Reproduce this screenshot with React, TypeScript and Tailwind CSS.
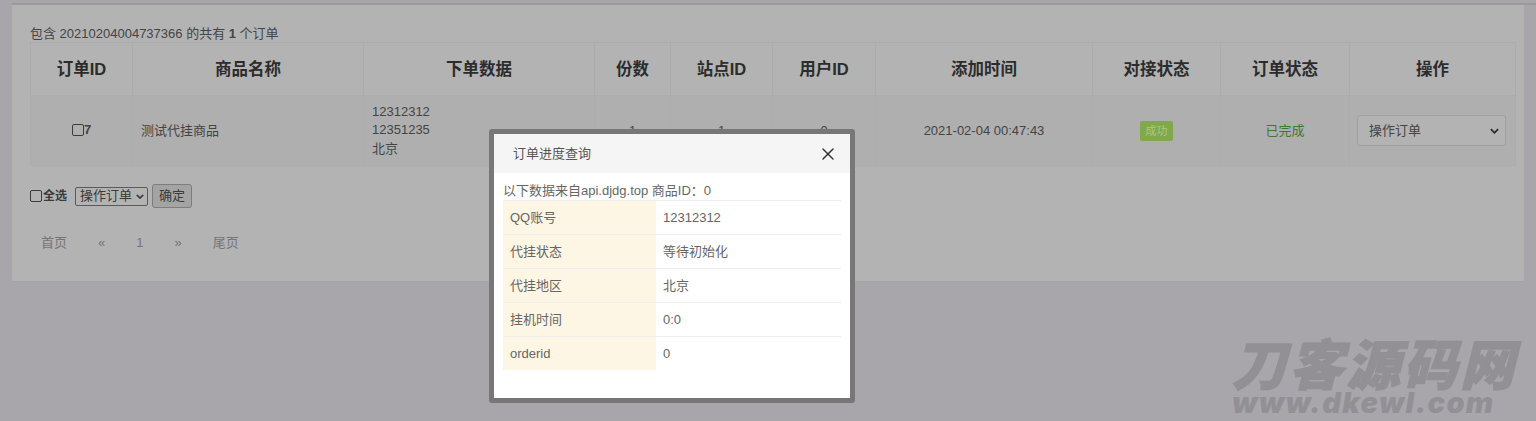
import { X } from 'lucide-react'

const font = { fontFamily: '"Liberation Sans", "Noto Sans CJK SC", sans-serif' }

const headers = [
  { label: '订单ID', width: 'w-[102px]' },
  { label: '商品名称', width: 'w-[231px]' },
  { label: '下单数据', width: 'w-[231px]' },
  { label: '份数', width: 'w-[76px]' },
  { label: '站点ID', width: 'w-[102px]' },
  { label: '用户ID', width: 'w-[103px]' },
  { label: '添加时间', width: 'w-[217px]' },
  { label: '对接状态', width: 'w-[128px]' },
  { label: '订单状态', width: 'w-[129px]' },
  { label: '操作', width: 'w-[166px]' },
]

const progress = [
  { label: 'QQ账号', value: '12312312' },
  { label: '代挂状态', value: '等待初始化' },
  { label: '代挂地区', value: '北京' },
  { label: '挂机时间', value: '0:0' },
  { label: 'orderid', value: '0' },
]

function Chevron({ className }: { className?: string }) {
  return (
    <svg viewBox="0 0 10 6" className={className} fill="none" stroke="currentColor" strokeWidth="2">
      <path d="M1 1l4 4 4-4" />
    </svg>
  )
}

export default function App() {
  const td = 'border border-[#acacac] text-[13px] text-[#444444] font-normal align-middle'

  return (
    <div style={font} className="relative w-[1536px] h-[421px] overflow-hidden bg-[#a8a6ab] pt-[3px]">
      <div className="h-[2px] ml-[12px] bg-[#9a9a9a]" />

      {/* Panel */}
      <div className="ml-[12px] mr-[12px] h-[277px] bg-[#b3b3b3] border-b border-[#a3a3a3] pl-[18px] pr-[9px] pt-[21px]">
        <div className="h-[16px] leading-[16px] text-[13px] text-[#444444]">
          包含 20210204004737366 的共有 <b className="font-semibold">1</b> 个订单
        </div>

        <table className="table-fixed border-collapse w-[1485px]">
          <thead>
            <tr className="h-[53px]">
              {headers.map((h) => (
                <th key={h.label} className={`${h.width} border border-[#acacac] text-[16.5px] font-bold text-[#2c2c2c]`}>
                  {h.label}
                </th>
              ))}
            </tr>
          </thead>
          <tbody>
            <tr className="h-[70px] bg-[#afafaf]">
              <td className={`${td} text-center`}>
                <span className="inline-flex items-center justify-center font-bold">
                  <span className="w-[12px] h-[12px] border border-[#3c3c3c] rounded-[2px]" />
                  7
                </span>
              </td>
              <td className={`${td} px-2`}>测试代挂商品</td>
              <td className={`${td} px-2 leading-[18.5px]`}>
                12312312
                <br />
                12351235
                <br />
                北京
              </td>
              <td className={`${td} text-center`}>1</td>
              <td className={`${td} text-center`}>1</td>
              <td className={`${td} text-center`}>0</td>
              <td className={`${td} text-center`}>2021-02-04 00:47:43</td>
              <td className={`${td} text-center`}>
                <span className="inline-block w-[33px] h-[20px] leading-[20px] rounded-[2px] bg-[#82a84c] text-[11px] text-[#a9c884]">
                  成功
                </span>
              </td>
              <td className={`${td} text-center !text-[#3a7a2c]`}>已完成</td>
              <td className={`${td} px-[7px]`}>
                <div className="flex items-center justify-between w-[149px] h-[31px] pl-[11px] pr-[6px] border border-[#a0a0a0] rounded-[3px] bg-[#b3b3b3]">
                  操作订单
                  <Chevron className="w-[9px] h-[6px] text-[#2c2c2c]" />
                </div>
              </td>
            </tr>
          </tbody>
        </table>

        <div className="flex items-center h-[24px] mt-[18px] text-[13px] text-[#3a3a3a]">
          <span className="w-[12px] h-[12px] border border-[#3c3c3c] rounded-[2px]" />
          <b className="ml-[1px] text-[12px] font-semibold">全选</b>
          <div className="flex items-center justify-between w-[73px] h-[19px] ml-[8px] pl-[4px] pr-[3px] border border-[#5a5a5a] rounded-[2px]">
            操作订单
            <Chevron className="w-[8px] h-[5px]" />
          </div>
          <div className="flex items-center justify-center w-[40px] h-[24px] ml-[4px] border border-[#7d7d7d] rounded-[3px] bg-[#a4a4a4]">
            确定
          </div>
        </div>

        <div className="flex items-center gap-[31px] mt-[23px] pl-[11px] h-[24px] text-[13px] text-[#757575]">
          <span>首页</span>
          <span>«</span>
          <span>1</span>
          <span>»</span>
          <span>尾页</span>
        </div>
      </div>

      {/* Progress dialog */}
      <div className="absolute left-[489px] top-[129px] w-[366px] h-[274px] border-[5px] border-[#777777] rounded-[3px] bg-white">
        <div className="flex items-center justify-between h-[39px] pl-[19px] pr-[12px] bg-[#f5f5f5] text-[13px] text-[#555555]">
          订单进度查询
          <X className="w-[20px] h-[20px] text-[#333333]" strokeWidth={1.7} />
        </div>
        <div className="px-[9px] pt-[8px]">
          <div className="h-[19px] leading-[19px] text-[13px] text-[#666666]">以下数据来自api.djdg.top 商品ID：0</div>
          <div className="text-[13px] text-[#666666]">
            {progress.map((row) => (
              <div key={row.label} className="flex h-[34px] border-t border-[#eeeeee]">
                <div className="w-[153px] pl-[7px] leading-[33px] bg-[#fdf6e4]">{row.label}</div>
                <div className="pl-[7px] leading-[33px]">{row.value}</div>
              </div>
            ))}
          </div>
        </div>
      </div>

      {/* Watermark */}
      <div className="absolute left-[1232px] top-[335px] w-[296px] text-[#929095] font-black italic">
        <div
          style={{ fontFamily: '"Noto Sans CJK SC", sans-serif' }}
          className="h-[55px] leading-[54px] text-[54px] tracking-[3px] whitespace-nowrap [-webkit-text-stroke:1.2px_#929095]"
        >
          刀客源码网
        </div>
        <div
          style={{ fontFamily: 'Inter, sans-serif' }}
          className="h-[26px] leading-[26px] text-[29px] tracking-[1.3px] whitespace-nowrap"
        >
          www.dkewl.com
        </div>
      </div>
    </div>
  )
}
